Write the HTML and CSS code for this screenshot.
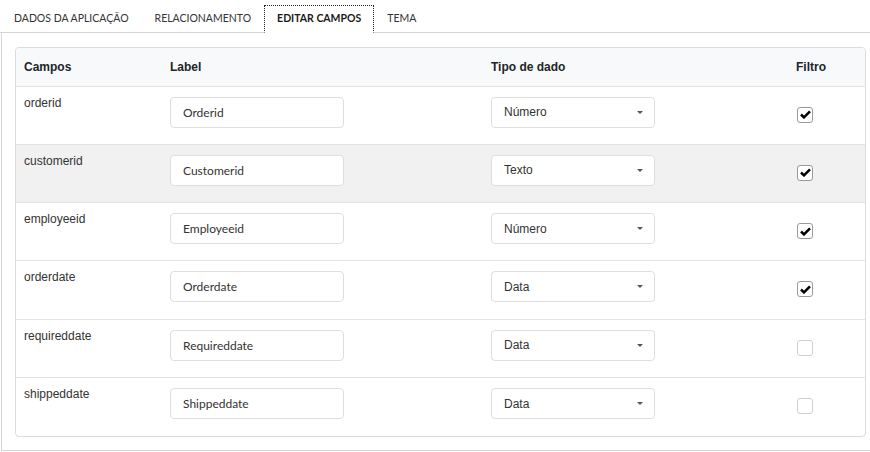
FILE: index.html
```html
<!DOCTYPE html>
<html lang="pt">
<head>
<meta charset="utf-8">
<link rel="stylesheet" href="styles.css">
</head>
<body>
<div class="tabs">
  <div class="tab">DADOS DA APLICAÇÃO</div>
  <div class="tab">RELACIONAMENTO</div>
  <div class="tab active">EDITAR CAMPOS</div>
  <div class="tab">TEMA</div>
</div>
<div class="panel">
  <div class="card">
    <table class="grid">
      <colgroup><col class="c1"><col class="c2"><col class="c3"><col class="c4"></colgroup>
      <thead>
        <tr><th>Campos</th><th>Label</th><th>Tipo de dado</th><th>Filtro</th></tr>
      </thead>
      <tbody>
        <tr><td class="name">orderid</td><td><div class="input">Orderid</div></td><td><div class="select">Número<span class="caret"></span></div></td><td><span class="check on"><svg viewBox="0 0 12 10" width="11" height="9"><path d="M1 5 L4.3 8.2 L11 1.5" fill="none" stroke="#000" stroke-width="2.8"/></svg></span></td></tr>
        <tr class="hover"><td class="name">customerid</td><td><div class="input">Customerid</div></td><td><div class="select">Texto<span class="caret"></span></div></td><td><span class="check on"><svg viewBox="0 0 12 10" width="11" height="9"><path d="M1 5 L4.3 8.2 L11 1.5" fill="none" stroke="#000" stroke-width="2.8"/></svg></span></td></tr>
        <tr><td class="name">employeeid</td><td><div class="input">Employeeid</div></td><td><div class="select">Número<span class="caret"></span></div></td><td><span class="check on"><svg viewBox="0 0 12 10" width="11" height="9"><path d="M1 5 L4.3 8.2 L11 1.5" fill="none" stroke="#000" stroke-width="2.8"/></svg></span></td></tr>
        <tr><td class="name">orderdate</td><td><div class="input">Orderdate</div></td><td><div class="select">Data<span class="caret"></span></div></td><td><span class="check on"><svg viewBox="0 0 12 10" width="11" height="9"><path d="M1 5 L4.3 8.2 L11 1.5" fill="none" stroke="#000" stroke-width="2.8"/></svg></span></td></tr>
        <tr><td class="name">requireddate</td><td><div class="input">Requireddate</div></td><td><div class="select">Data<span class="caret"></span></div></td><td><span class="check"></span></td></tr>
        <tr><td class="name">shippeddate</td><td><div class="input">Shippeddate</div></td><td><div class="select">Data<span class="caret"></span></div></td><td><span class="check"></span></td></tr>
      </tbody>
    </table>
  </div>
</div>
</body>
</html>
```
FILE: styles.css
```css
* { box-sizing: border-box; }
html, body { margin: 0; padding: 0; background: #fff; }
body { font-family: "Liberation Sans", Arial, sans-serif; color: #333; width: 870px; height: 452px; overflow: hidden; }

.tabs {
  display: flex;
  height: 33px;
  padding: 5px 0 0 1px;
  border-bottom: 1px solid #d4d4d4;
  font-family: Lato, "Open Sans", sans-serif;
  font-size: 10.5px;
}
.tab {
  padding: 0 13px;
  line-height: 26px;
  color: #333;
  margin-bottom: -1px;
}
.active {
  font-weight: bold;
  color: #1a1a1a;
  background: #fff;
  border: 1px dotted #222;
  border-bottom: 1px solid #fff;
  line-height: 25px;
  padding: 0 12px;
}

.panel {
  margin-left: 1px;
  border-left: 1px solid #d4d4d4;
  border-bottom: 1px solid #d4d4d4;
  height: 418px;
  padding: 14px 5px 0 13px;
}
.card {
  border: 1px solid #dcdcdc;
  border-radius: 4px;
  overflow: hidden;
  width: 851px;
}
.grid {
  width: 100%;
  border-collapse: collapse;
  table-layout: fixed;
  font-size: 12px;
}
.c1 { width: 146px; }
.c2 { width: 321px; }
.c3 { width: 305px; }
.c4 { width: auto; }

th {
  text-align: left;
  font-weight: bold;
  color: #212529;
  background: #f8f9fa;
  height: 38px;
  padding: 0 8px;
  border-bottom: 1px solid #e3e3e3;
}
td {
  height: 58.33px;
  padding: 0 8px;
  vertical-align: top;
  border-top: 1px solid #e3e3e3;
}
tbody tr:first-child td { border-top: none; }
tr.hover td { background: #f1f1f1; }
td.name { padding-top: 9px; color: #333; }

.input, .select {
  margin-top: 10px;
  height: 31px;
  border: 1px solid #dedede;
  border-radius: 4px;
  background: #fff;
  display: flex;
  align-items: center;
}
.input {
  width: 174px;
  padding-left: 12px;
  font-family: Lato, "Open Sans", sans-serif;
  font-size: 12px;
  color: #333;
}
.select {
  width: 164px;
  padding: 0 11px 0 12px;
  justify-content: space-between;
  font-size: 12px;
  color: #333;
}
.caret {
  width: 0; height: 0;
  border-left: 3px solid transparent;
  border-right: 3px solid transparent;
  border-top: 3px solid #555;
}
.check {
  display: flex;
  align-items: center;
  justify-content: center;
  width: 16px;
  height: 16px;
  margin: 20px 0 0 1px;
  border: 1px solid #cfcfcf;
  border-radius: 3px;
  background: #fff;
}
.check.on { border-color: #9a9a9a; }
```
